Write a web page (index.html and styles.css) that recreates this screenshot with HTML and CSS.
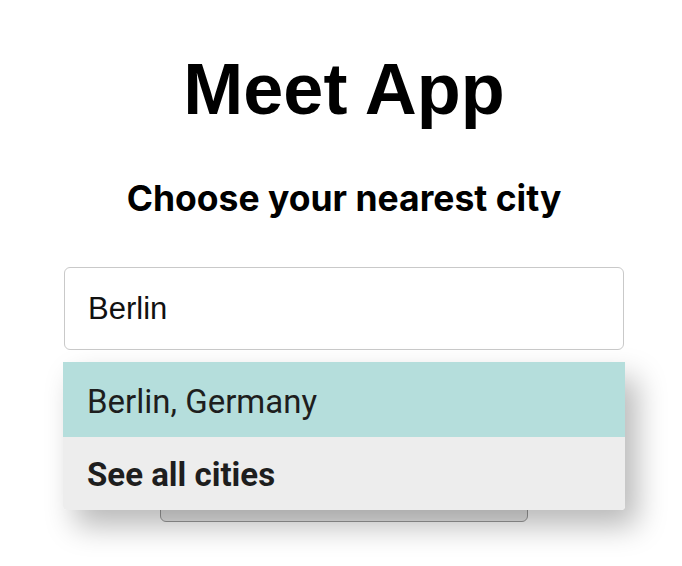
FILE: index.html
```html
<!DOCTYPE html>
<html lang="en">
<head>
<meta charset="utf-8">
<title>Meet App</title>
<link rel="stylesheet" href="styles.css">
</head>
<body>
<div class="app">
  <h1 class="title">Meet App</h1>
  <h2 class="subtitle">Choose your nearest city</h2>
  <div class="city-search">
    <input class="city" type="text" value="Berlin">
    <ul class="suggestions">
      <li class="suggestion active">Berlin, Germany</li>
      <li class="suggestion all"><b>See all cities</b></li>
    </ul>
  </div>
  <div class="number-of-events">
    <button class="events-btn" type="button"></button>
  </div>
</div>
</body>
</html>
```
FILE: styles.css
```css
html, body {
  margin: 0;
  padding: 0;
  background: #ffffff;
}

body {
  font-family: "Liberation Sans", Arial, sans-serif;
  color: #000;
  min-height: 566px;
}

.app {
  padding: 49px 0 44px 6px;
  display: flex;
  flex-direction: column;
  align-items: center;
}

.title {
  margin: 0;
  font-family: "Liberation Sans", Arial, sans-serif;
  font-weight: 700;
  font-size: 72px;
  line-height: 80px;
  text-align: center;
}

.subtitle {
  margin: 50px 0 0;
  font-family: Inter, "Liberation Sans", sans-serif;
  font-weight: 700;
  font-size: 35.5px;
  line-height: 40px;
  text-align: center;
}

.city-search {
  position: relative;
  margin-top: 48px;
  width: 560px;
}

.city {
  display: block;
  box-sizing: border-box;
  width: 560px;
  height: 83px;
  margin: 0;
  padding: 0 23px;
  border: 1px solid #c9c9c9;
  border-radius: 6px;
  font-family: "Liberation Sans", Arial, sans-serif;
  font-size: 31px;
  color: #111;
  background: #fff;
  outline: none;
}

.suggestions {
  position: absolute;
  z-index: 2;
  top: 95px;
  left: -1px;
  width: 562px;
  margin: 0;
  padding: 0;
  list-style: none;
  border-radius: 0 0 4px 4px;
  overflow: hidden;
  box-shadow: 12px 16px 30px rgba(0, 0, 0, 0.28);
}

.suggestion {
  font-family: Roboto, "Liberation Sans", sans-serif;
  font-size: 33px;
  line-height: 39px;
  color: #1e1e1e;
  padding: 20px 24px 16px;
}

.suggestion.active {
  background: #b5dedc;
}

.suggestion.all {
  background: #ededed;
  padding: 18px 24px 16px;
}

.number-of-events {
  margin-top: 122px;
}

.events-btn {
  display: block;
  width: 368px;
  height: 50px;
  border: 1px solid #9a9a9a;
  border-radius: 6px;
  background: #e8e8e8;
}
```
